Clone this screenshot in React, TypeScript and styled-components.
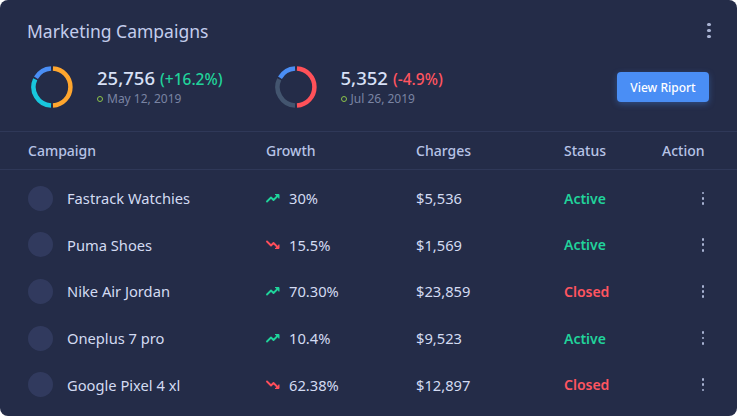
import React from "react";
import styled, { createGlobalStyle } from "styled-components";

const Global = createGlobalStyle`
  html, body { margin: 0; padding: 0; background: #ffffff; }
  body { font-family: "Noto Sans", "Open Sans", sans-serif; -webkit-font-smoothing: antialiased; }
  * { box-sizing: border-box; }
`;

const Card = styled.div`
  width: 737px;
  height: 416px;
  background: #242c48;
  border-radius: 8px;
  overflow: hidden;
  color: #d3dbf2;
`;

const Header = styled.div`
  display: flex;
  align-items: center;
  justify-content: space-between;
  padding: 17px 20px 0 27px;
  height: 44px;
`;

const Title = styled.h1`
  margin: 0;
  font-size: 17.5px;
  font-weight: 400;
  line-height: 26px;
  color: #c3cdec;
`;

const KebabWrap = styled.span<{ $size: number }>`
  display: inline-flex;
  flex-direction: column;
  align-items: center;
  justify-content: center;
  gap: ${(p) => p.$size * 0.9}px;
  width: 16px;
  & > i {
    display: block;
    width: ${(p) => p.$size}px;
    height: ${(p) => p.$size}px;
    border-radius: 50%;
    background: #a9b3d3;
  }
`;

const Kebab = ({ size = 3.2 }: { size?: number }) => (
  <KebabWrap $size={size}>
    <i />
    <i />
    <i />
  </KebabWrap>
);

const Stats = styled.div`
  display: flex;
  align-items: center;
  padding: 22px 28px 23px 31px;
  border-bottom: 1px solid #2f3858;
`;

const Stat = styled.div<{ $gap?: number }>`
  display: flex;
  align-items: center;
  gap: 24px;
  margin-right: ${(p) => p.$gap ?? 0}px;
`;

const StatText = styled.div`
  display: flex;
  flex-direction: column;
  gap: 1px;
`;

const Value = styled.div`
  font-size: 18.5px;
  font-weight: 500;
  line-height: 22px;
  color: #d8e0f6;
  white-space: nowrap;
`;

const Change = styled.span<{ $up: boolean }>`
  font-size: 15.5px;
  font-weight: 500;
  color: ${(p) => (p.$up ? "#21d39b" : "#ff5560")};
  margin-left: 5px;
`;

const DateLine = styled.div`
  display: flex;
  align-items: center;
  gap: 4px;
  font-size: 12px;
  line-height: 16px;
  color: #7a84a3;
`;

const Dot = styled.span`
  width: 6px;
  height: 6px;
  border-radius: 50%;
  border: 1.5px solid #8bc34a;
`;

const Spacer = styled.div`
  flex: 1;
`;

const Button = styled.button`
  width: 92px;
  height: 30px;
  border: none;
  border-radius: 4px;
  background: #4a8ef5;
  color: #ffffff;
  font-family: inherit;
  font-size: 12px;
  font-weight: 500;
  box-shadow: 0 2px 6px rgba(74, 142, 245, 0.35);
  cursor: pointer;
`;

const cols = "238px 150px 148px 98px 1fr";

const HeadRow = styled.div`
  display: grid;
  grid-template-columns: ${cols};
  align-items: center;
  height: 38px;
  padding-left: 28px;
  border-bottom: 1px solid #2f3858;
  font-size: 14px;
  font-weight: 500;
  color: #b7c3e6;
`;

const Body = styled.div`
  padding-top: 5px;
`;

const Row = styled.div`
  display: grid;
  grid-template-columns: ${cols};
  align-items: center;
  height: 46.6px;
  padding-left: 28px;
  font-size: 14.7px;
  color: #d3dbf2;
`;

const NameCell = styled.div`
  display: flex;
  align-items: center;
  gap: 14px;
`;

const Avatar = styled.span`
  width: 25px;
  height: 25px;
  border-radius: 50%;
  background: #313a5e;
`;

const GrowthCell = styled.div`
  display: flex;
  align-items: center;
  gap: 9px;
`;

const Status = styled.div<{ $active: boolean }>`
  font-size: 14px;
  font-weight: 600;
  color: ${(p) => (p.$active ? "#21d39b" : "#ff5560")};
`;

const ActionCell = styled.div`
  display: flex;
  justify-content: flex-end;
  padding-right: 26px;
`;

const TrendIcon = ({ up }: { up: boolean }) => {
  const c = up ? "#1fd49b" : "#ff4e5b";
  return up ? (
    <svg width="14" height="10" viewBox="0 0 14 10" fill="none">
      <path d="M1 8.5 L5 4.5 L7.5 7 L12 2.5" stroke={c} strokeWidth="1.8" strokeLinecap="round" strokeLinejoin="round" />
      <path d="M9 1.5 H13 V5.5" fill={c} stroke={c} strokeWidth="1" strokeLinejoin="round" />
    </svg>
  ) : (
    <svg width="14" height="10" viewBox="0 0 14 10" fill="none">
      <path d="M1 1.5 L5 5.5 L7.5 3 L12 7.5" stroke={c} strokeWidth="1.8" strokeLinecap="round" strokeLinejoin="round" />
      <path d="M9 8.5 H13 V4.5" fill={c} stroke={c} strokeWidth="1" strokeLinejoin="round" />
    </svg>
  );
};

const arc = (r: number, a0: number, a1: number) => {
  const p = (a: number) => {
    const rad = ((a - 90) * Math.PI) / 180;
    return [21 + r * Math.cos(rad), 21 + r * Math.sin(rad)];
  };
  const [x0, y0] = p(a0);
  const [x1, y1] = p(a1);
  const large = a1 - a0 > 180 ? 1 : 0;
  return `M${x0.toFixed(2)} ${y0.toFixed(2)} A${r} ${r} 0 ${large} 1 ${x1.toFixed(2)} ${y1.toFixed(2)}`;
};

const Donut = ({ colors }: { colors: [string, string, string] }) => {
  const r = 18.5;
  return (
    <svg width="42" height="42" viewBox="0 0 42 42">
      <path d={arc(r, 3, 177)} stroke={colors[0]} strokeWidth="4.5" fill="none" />
      <path d={arc(r, 183, 295)} stroke={colors[1]} strokeWidth="4.5" fill="none" />
      <path d={arc(r, 300, 357)} stroke={colors[2]} strokeWidth="4.5" fill="none" />
    </svg>
  );
};

const rows = [
  { name: "Fastrack Watchies", up: true, growth: "30%", charges: "$5,536", active: true },
  { name: "Puma Shoes", up: false, growth: "15.5%", charges: "$1,569", active: true },
  { name: "Nike Air Jordan", up: true, growth: "70.30%", charges: "$23,859", active: false },
  { name: "Oneplus 7 pro", up: true, growth: "10.4%", charges: "$9,523", active: true },
  { name: "Google Pixel 4 xl", up: false, growth: "62.38%", charges: "$12,897", active: false },
];

export default function App() {
  return (
    <>
      <Global />
      <Card>
        <Header>
          <Title>Marketing Campaigns</Title>
          <Kebab />
        </Header>
        <Stats>
          <Stat $gap={52}>
            <Donut colors={["#ffa62e", "#18c7de", "#4a8ef5"]} />
            <StatText>
              <Value>
                25,756<Change $up>(+16.2%)</Change>
              </Value>
              <DateLine>
                <Dot />
                May 12, 2019
              </DateLine>
            </StatText>
          </Stat>
          <Stat>
            <Donut colors={["#ff5159", "#43556f", "#4a8ef5"]} />
            <StatText>
              <Value>
                5,352<Change $up={false}>(-4.9%)</Change>
              </Value>
              <DateLine>
                <Dot />
                Jul 26, 2019
              </DateLine>
            </StatText>
          </Stat>
          <Spacer />
          <Button>View Riport</Button>
        </Stats>
        <HeadRow>
          <div>Campaign</div>
          <div>Growth</div>
          <div>Charges</div>
          <div>Status</div>
          <div>Action</div>
        </HeadRow>
        <Body>
          {rows.map((r) => (
            <Row key={r.name}>
              <NameCell>
                <Avatar />
                {r.name}
              </NameCell>
              <GrowthCell>
                <TrendIcon up={r.up} />
                {r.growth}
              </GrowthCell>
              <div>{r.charges}</div>
              <Status $active={r.active}>{r.active ? "Active" : "Closed"}</Status>
              <ActionCell>
                <Kebab size={2.8} />
              </ActionCell>
            </Row>
          ))}
        </Body>
      </Card>
    </>
  );
}
